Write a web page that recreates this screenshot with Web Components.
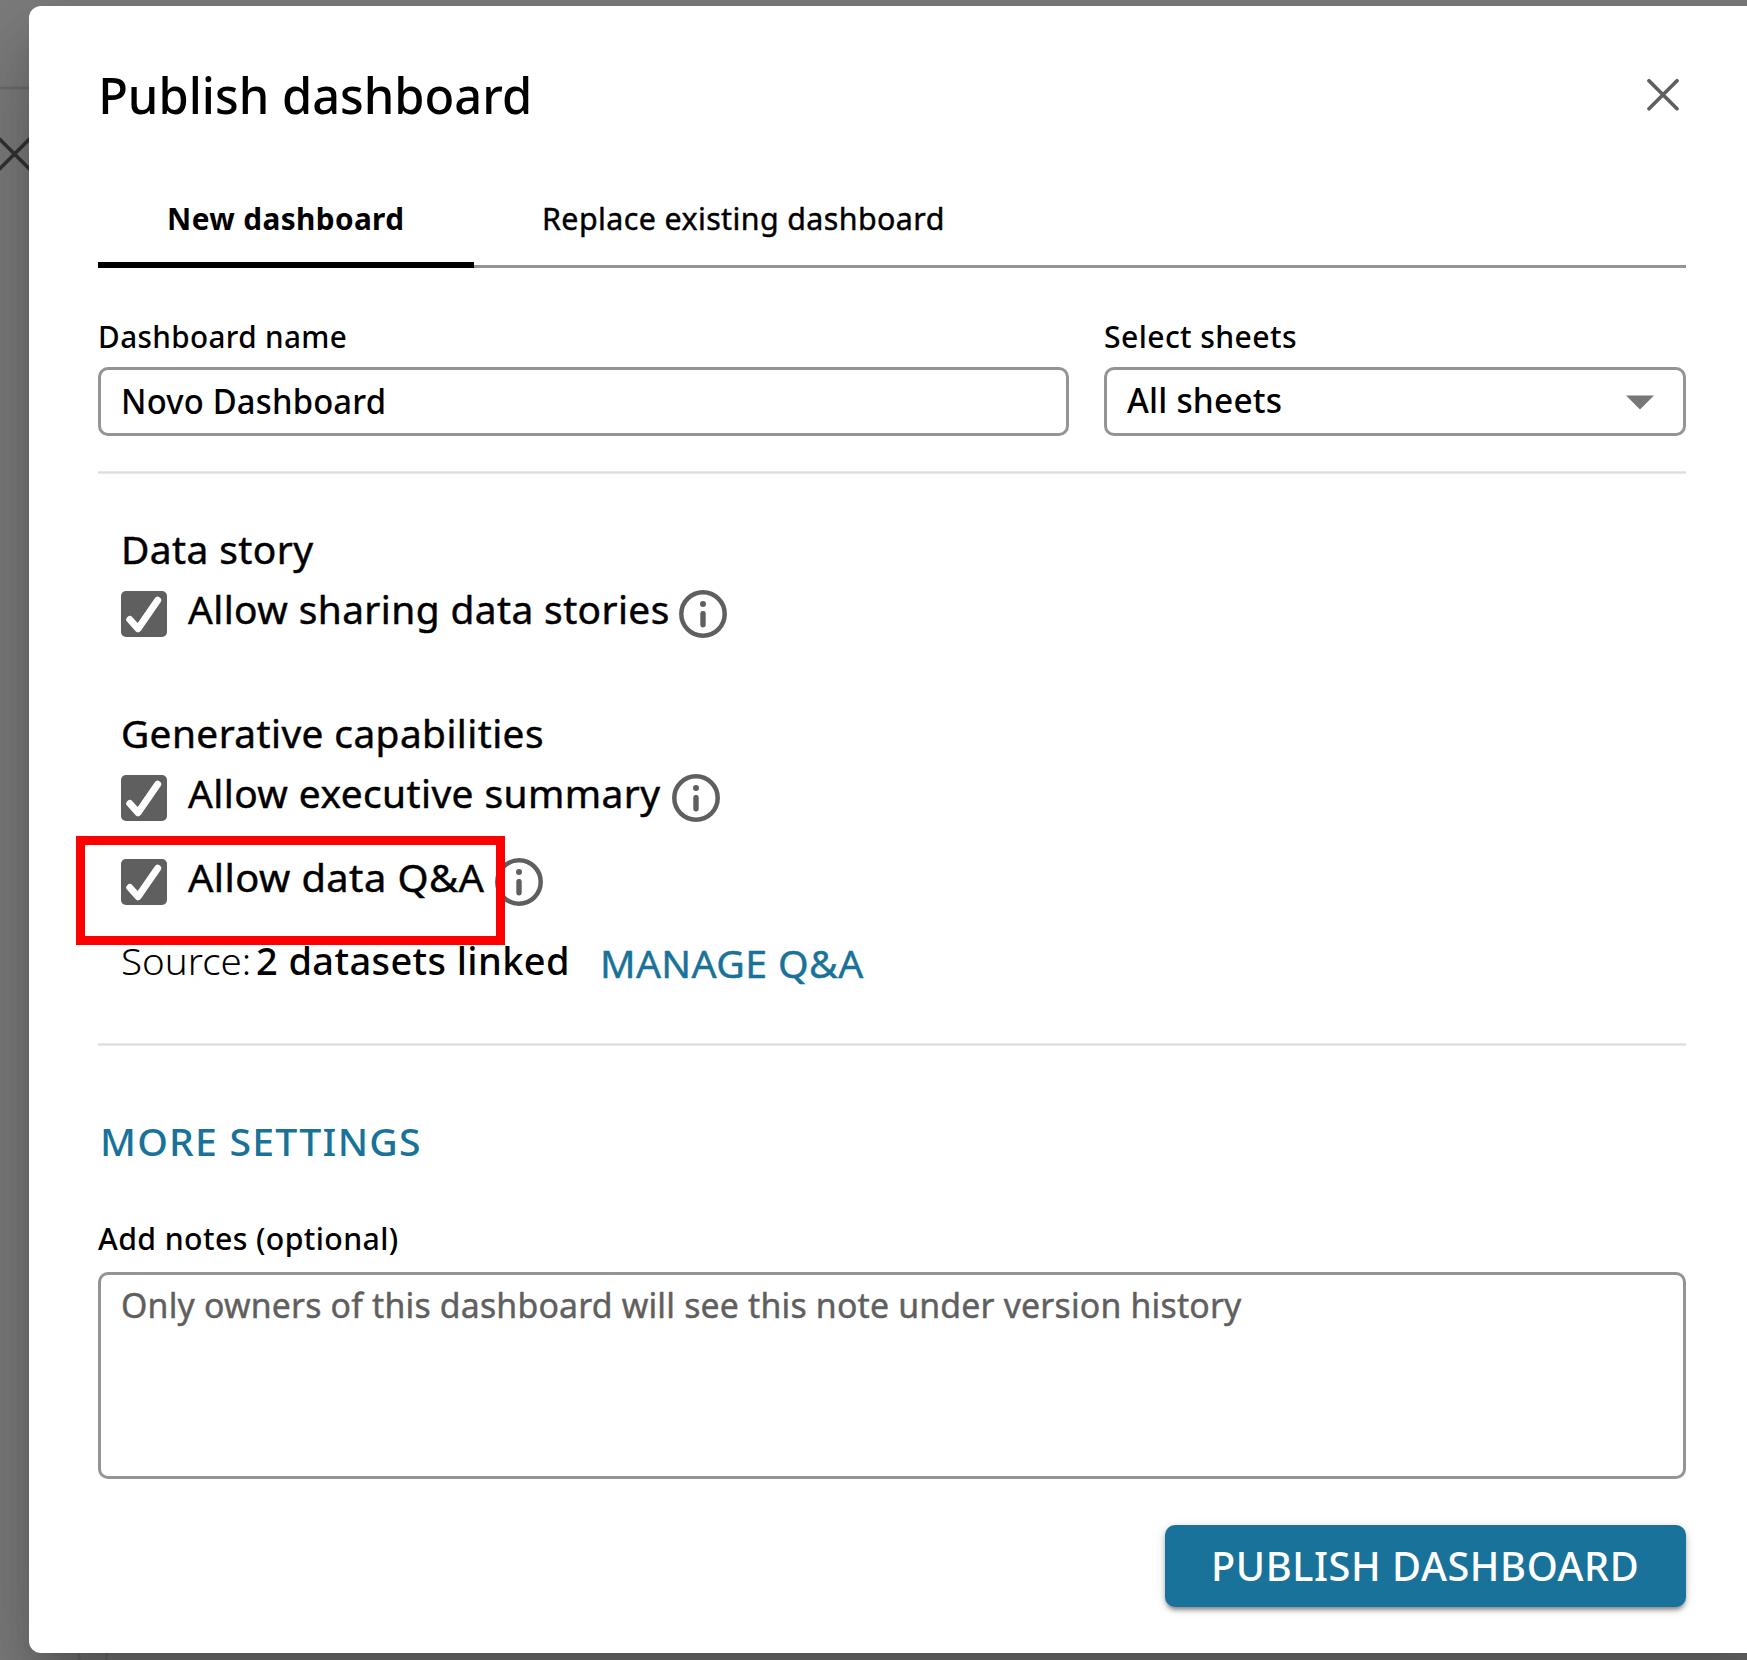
<!DOCTYPE html>
<html lang="en">
<head>
<meta charset="utf-8">
<title>Publish dashboard</title>
<style>
html,body{margin:0;height:1660px;overflow:hidden;background:#7d7d7d}
body{font-family:"Noto Sans","Open Sans",sans-serif;color:#000}
</style>
</head>
<body>
<publish-page></publish-page>
<script>
const define = (name, html, setup) => customElements.define(name, class extends HTMLElement {
  connectedCallback() {
    if (this.shadowRoot) return;
    const t = document.createElement('template');
    t.innerHTML = html;
    this.attachShadow({ mode: 'open' }).appendChild(t.content.cloneNode(true));
    if (setup) setup(this, this.shadowRoot);
  }
});

/* One line of text, condensed or widened so that its ink fills "w" pixels. */
const pen = document.createElement('canvas').getContext('2d');
define('fit-text', `<style>
  :host{display:block;flex:none;white-space:nowrap}
  :host(:not([weight])){-webkit-text-stroke:.45px currentColor}
  span{display:inline-block;transform-origin:0 50%;white-space:nowrap}
</style><span><slot></slot></span>`, (el, root) => {
  const size = +el.getAttribute('size'), w = +el.getAttribute('w');
  const weight = el.getAttribute('weight') || '400';
  const ls = el.getAttribute('ls') || '0';
  const line = el.getAttribute('line');
  pen.font = `${weight} ${size}px "Noto Sans","Open Sans",sans-serif`;
  pen.letterSpacing = ls + 'px';
  const m = pen.measureText(el.textContent);
  const left = -m.actualBoundingBoxLeft;
  const s = w / (m.actualBoundingBoxRight - left);
  el.style.cssText += `;width:${w}px;height:${line}px;line-height:${line}px;font-size:${size}px;font-weight:${weight};letter-spacing:${ls}px`;
  root.querySelector('span').style.transform = `translateX(${-left * s}px) scaleX(${s})`;
});

define('close-icon', `<style>:host{display:block;flex:none;width:34px;height:34px}svg{display:block}</style>
<svg width="34" height="34" viewBox="0 0 34 34" fill="none" stroke="#5f5f5f" stroke-width="3.7" stroke-linecap="round"><path d="M3 3.7 31 31.7M31 3.7 3 31.7"/></svg>`);

define('info-icon', `<style>:host{display:block;flex:none;width:48px;height:48px}svg{display:block}</style>
<svg width="48" height="48" viewBox="0 0 48 48"><circle cx="24" cy="24" r="21.7" fill="none" stroke="#5f5f5f" stroke-width="4.5"/><circle cx="24" cy="14" r="3" fill="#5f5f5f"/><rect x="21.3" y="21" width="5.4" height="16.5" rx="2.4" fill="#5f5f5f"/></svg>`);

define('check-box', `<style>:host{display:block;flex:none;width:46px;height:46px}svg{display:block}</style>
<svg width="46" height="46" viewBox="0 0 46 46"><rect width="46" height="46" rx="5" fill="#5f5f5f"/><path d="M8.8 28.5 17 37.7 36.7 9.3" fill="none" stroke="#fff" stroke-width="7" stroke-linecap="round" stroke-linejoin="round"/></svg>`);

define('check-option', `<style>
  :host{display:flex;align-items:flex-start;height:48px;padding-left:22.5px;position:relative}
  check-box{margin-top:1px}
  .label{margin:-6px 11.7px 0 21px}
  .mark{display:none;position:absolute;left:-22px;top:-22px;width:429px;height:109px;box-sizing:border-box;border:9px solid #f00}
  :host([marked]) .mark{display:block}
</style><check-box></check-box><div class="label"><slot></slot></div><info-icon></info-icon><div class="mark"></div>`);

define('tab-bar', `<style>
  :host{display:flex;height:71px;margin-top:69px;box-sizing:border-box;background:linear-gradient(#949494,#949494) 0 100%/100% 3px no-repeat}
</style><slot></slot>`);
define('tab-item', `<style>
  :host{display:block;box-sizing:border-box;padding-left:70px}
  :host([active]){width:376px;border-bottom:6px solid #000}
</style><slot></slot>`);

define('form-field', `<style>
  :host{display:flex;flex-direction:column;flex:none}
  .box{margin-top:var(--gap,10px);height:var(--h,69px);box-sizing:border-box;border:3px solid #949494;border-radius:10px;display:flex;align-items:flex-start;justify-content:space-between}
</style><slot name="label"></slot><div class="box"><slot></slot></div>`);

define('caret-icon', `<style>:host{display:block;margin:25px 29px 0 0}svg{display:block}</style>
<svg width="28" height="15" viewBox="0 0 28 15"><path d="M0 .4H28L14 14.6Z" fill="#777"/></svg>`);

define('rule-line', `<style>:host{display:block;height:3px;background:linear-gradient(#e8e8e8 1px,#dedede 1px 2px,#e8e8e8 2px)}</style>`);

define('action-button', `<style>
  :host{display:block;box-sizing:border-box;align-self:flex-end;width:521px;height:82px;padding:13.5px 0 0 48.5px;border-radius:10px;background:#19729a;color:#fff;
  box-shadow:0 5px 4px -3px rgba(0,0,0,.3),0 3px 5px rgba(0,0,0,.2),0 2px 11px rgba(0,0,0,.14)}
</style><slot></slot>`);

define('modal-dialog', `<style>
  :host{display:flex;flex-direction:column;box-sizing:border-box;flex:none;width:1760px;height:1647px;margin:6px 0 0 29px;padding:54px 103px 0 69px;background:#fff;border-radius:12px;position:relative;
  box-shadow:0 24px 33px -15px rgba(0,0,0,.2),0 53px 84px 7px rgba(0,0,0,.14),0 20px 101px 18px rgba(0,0,0,.12)}
</style><slot></slot>`);

define('page-behind', `<style>
  :host{display:block;position:absolute;inset:0}
  svg{display:block}
</style><svg width="1747" height="1660" viewBox="0 0 1747 1660" fill="none">
<path d="M0 88H40" stroke="#6c6c6c" stroke-width="2.5"/>
<path d="M-1 138.5 30 169.5M-1 169.5 30 138.5" stroke="#333" stroke-width="3.6"/>
<path d="M79 1640V1660M106.5 1640V1660" stroke="#727272" stroke-width="3"/>
</svg>`);

define('publish-page', `<style>
  :host{display:flex;width:1747px;height:1660px;overflow:hidden;position:relative}
  header{display:flex;height:68px;justify-content:space-between;align-items:center;padding:0 6px 0 3.8px}
  header fit-text{margin-top:1px}
  .fields{display:flex;gap:35px;margin-top:47px}
  .link{color:#19729a}
  .source{display:flex;margin:29px 0 56px 25.2px;height:52px}
</style>
<page-behind></page-behind>
<modal-dialog>
  <header><fit-text size="50.4" w="427" line="68" weight="500">Publish dashboard</fit-text><close-icon></close-icon></header>
  <tab-bar>
    <tab-item active><fit-text size="31" w="233.5" line="42" weight="700" ls="0.4" style="margin-left:.6px">New dashboard</fit-text></tab-item>
    <tab-item><fit-text size="31" w="397.3" line="42" ls="0.4" style="margin-left:.8px">Replace existing dashboard</fit-text></tab-item>
  </tab-bar>
  <div class="fields">
    <form-field style="width:971px">
      <fit-text slot="label" size="31" w="246" line="42" weight="500" ls="0.4" style="margin-left:2px">Dashboard name</fit-text>
      <fit-text size="34" w="260" line="46" weight="500" ls="0.2" style="margin:8px 0 0 22.6px">Novo Dashboard</fit-text>
    </form-field>
    <form-field style="width:582px">
      <fit-text slot="label" size="31" w="190.5" line="42" weight="500" ls="0.4" style="margin-left:.5px">Select sheets</fit-text>
      <fit-text size="34" w="154.5" line="46" weight="500" ls="0.2" style="margin:7px 0 0 19.6px">All sheets</fit-text>
      <caret-icon></caret-icon>
    </form-field>
  </div>
  <rule-line style="margin-top:35px"></rule-line>
  <fit-text size="37.5" w="190" line="52" ls="0.4" style="margin:50px 0 0 25.6px">Data story</fit-text>
  <check-option style="margin-top:14px"><fit-text size="37.5" w="480.3" line="52" ls="0.4">Allow sharing data stories</fit-text></check-option>
  <fit-text size="37.5" w="419.5" line="52" ls="0.4" style="margin:70px 0 0 25.4px">Generative capabilities</fit-text>
  <check-option style="margin-top:14px"><fit-text size="37.5" w="473" line="52" ls="0.4">Allow executive summary</fit-text></check-option>
  <check-option marked style="margin-top:36px"><fit-text size="37.5" w="296" line="52" ls="0.4">Allow data Q&amp;A</fit-text></check-option>
  <div class="source">
    <fit-text size="37.5" w="126" line="52" weight="300">Source:</fit-text>
    <fit-text size="37.5" w="310.3" line="52" weight="500" ls="0.4" style="margin-left:8px">2 datasets linked</fit-text>
    <fit-text class="link" size="38" w="261" line="52" ls="0.4" style="margin:2px 0 0 35.2px">MANAGE Q&amp;A</fit-text>
  </div>
  <rule-line></rule-line>
  <fit-text class="link" size="38.5" w="316.3" line="52" weight="500" ls="1.2" style="margin:69px 0 0 5.4px">MORE SETTINGS</fit-text>
  <form-field style="margin-top:50px;--gap:13px;--h:207px">
    <fit-text slot="label" size="31" w="299.6" line="42" weight="500" ls="0.4">Add notes (optional)</fit-text>
    <fit-text size="34" w="1119" line="46" ls="0.2" style="margin:6.6px 0 0 21.6px;color:#5f5f5f">Only owners of this dashboard will see this note under version history</fit-text>
  </form-field>
  <action-button style="margin-top:46px"><fit-text size="39.7" w="422.7" line="54" weight="500" ls="0.6">PUBLISH DASHBOARD</fit-text></action-button>
</modal-dialog>`);
</script>
</body>
</html>
